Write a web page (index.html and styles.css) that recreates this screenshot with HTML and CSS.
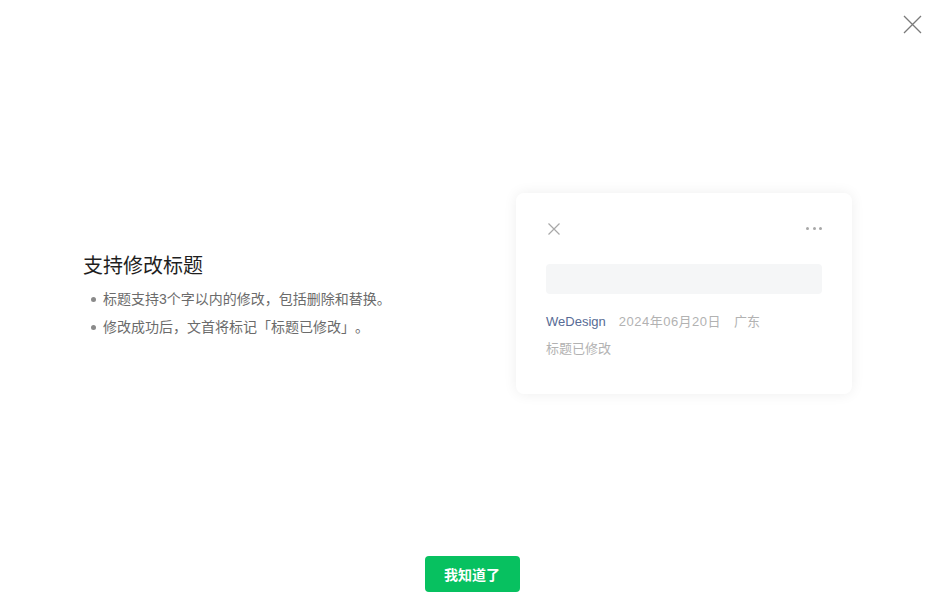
FILE: index.html
```html
<!DOCTYPE html>
<html lang="zh-CN">
<head>
<meta charset="utf-8">
<title>支持修改标题</title>
<link rel="stylesheet" href="styles.css">
</head>
<body>
<div class="page">
  <button class="page-close" aria-label="关闭">
    <svg width="19" height="19" viewBox="0 0 19 19"><path d="M1 1L18 18M18 1L1 18" stroke="#7a7a7a" stroke-width="1.3" fill="none"/></svg>
  </button>
  <main class="main">
    <section class="intro">
      <h1 class="intro-title">支持修改标题</h1>
      <ul class="intro-list">
        <li>标题支持3个字以内的修改，包括删除和替换。</li>
        <li>修改成功后，文首将标记「标题已修改」。</li>
      </ul>
    </section>
    <section class="card">
      <div class="card-bar">
        <svg class="card-x" width="12" height="12" viewBox="0 0 12 12"><path d="M0.5 0.5L11.5 11.5M11.5 0.5L0.5 11.5" stroke="#a8a8a8" stroke-width="1.2" fill="none"/></svg>
        <span class="card-dots"><i></i><i></i><i></i></span>
      </div>
      <div class="card-placeholder"></div>
      <div class="card-meta">
        <span class="meta-name">WeDesign</span>
        <span class="meta-gray meta-date">2024年06月20日</span>
        <span class="meta-gray">广东</span>
      </div>
      <div class="card-note">标题已修改</div>
    </section>
  </main>
  <footer class="footer">
    <button class="ok-btn">我知道了</button>
  </footer>
</div>
</body>
</html>
```

FILE: styles.css
```css
* { box-sizing: border-box; }
html, body { margin: 0; padding: 0; background: #fff; }
body {
  font-family: "Liberation Sans", "Noto Sans CJK SC", sans-serif;
  width: 943px;
  height: 609px;
  overflow: hidden;
  text-spacing-trim: space-all;
}
.page {
  position: relative;
  height: 609px;
  display: flex;
  flex-direction: column;
}
.page-close {
  position: absolute;
  top: 15px;
  right: 21px;
  width: 19px;
  height: 19px;
  padding: 0;
  border: 0;
  background: none;
  display: block;
}
.page-close svg { display: block; }
.main {
  flex: 1;
  display: flex;
  align-items: center;
  justify-content: space-between;
  padding: 30px 91px 0 83px;
}
.intro { margin-top: 8px; }
.intro-title {
  margin: 0 0 6px;
  font-size: 20px;
  font-weight: normal;
  line-height: 26px;
  color: #1f1f1f;
}
.intro-list {
  list-style: none;
  margin: 0;
  padding: 0;
}
.intro-list li {
  position: relative;
  padding-left: 20px;
  font-size: 14px;
  line-height: 28px;
  color: #6b6b6b;
}
.intro-list li::before {
  content: "";
  position: absolute;
  left: 8px;
  top: 12px;
  width: 5px;
  height: 5px;
  border-radius: 50%;
  background: #8a8a8a;
}
.card {
  width: 336px;
  background: #fff;
  border-radius: 8px;
  box-shadow: 0 0 14px rgba(0, 0, 0, 0.07);
  padding: 30px 30px 34px;
}
.card-bar {
  display: flex;
  align-items: center;
  justify-content: space-between;
  height: 12px;
  padding-left: 2px;
}
.card-x { display: block; }
.card-dots {
  display: flex;
  gap: 3.5px;
}
.card-dots i {
  display: block;
  width: 3px;
  height: 3px;
  border-radius: 50%;
  background: #a8a8a8;
}
.card-placeholder {
  margin-top: 29px;
  height: 30px;
  border-radius: 4px;
  background: #f5f6f7;
}
.card-meta {
  margin-top: 17px;
  display: flex;
  gap: 13px;
  font-size: 13px;
  line-height: 22px;
}
.meta-name { color: #576b95; }
.meta-gray { color: #b2b2b2; }
.meta-date { letter-spacing: 0.5px; }
.card-note {
  margin-top: 5px;
  font-size: 13px;
  line-height: 22px;
  color: #b2b2b2;
}
.footer {
  display: flex;
  justify-content: center;
  padding: 0 0 17px 1px;
}
.ok-btn {
  width: 95px;
  height: 36px;
  border: 0;
  border-radius: 4px;
  background: #07c160;
  color: #fff;
  font-family: "Liberation Sans", "Noto Sans CJK SC", sans-serif;
  font-size: 14px;
  font-weight: bold;
  padding: 0;
}
```
